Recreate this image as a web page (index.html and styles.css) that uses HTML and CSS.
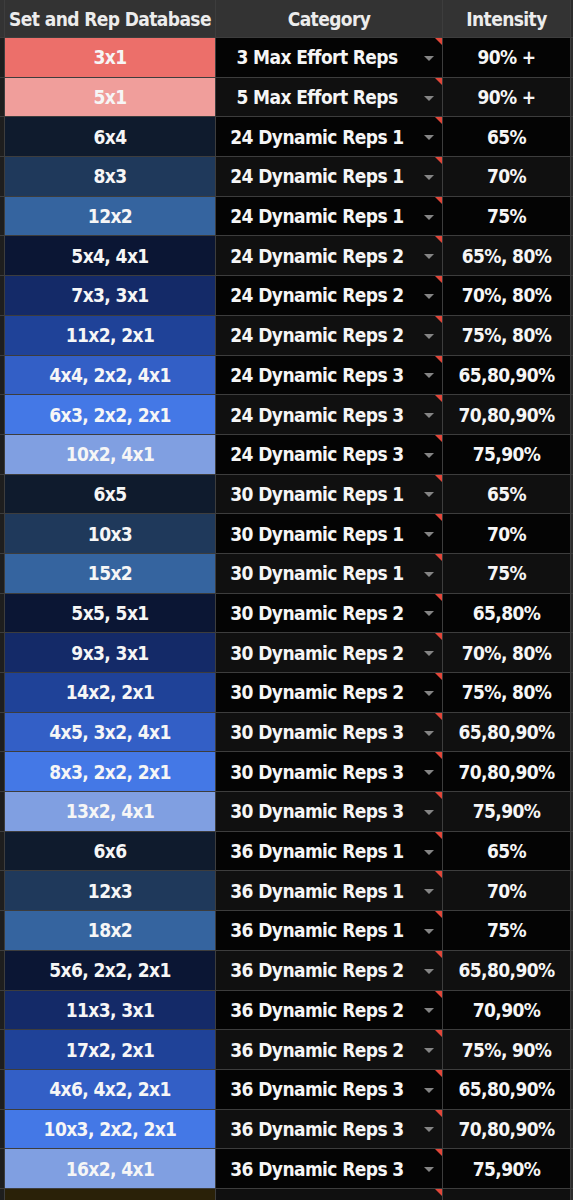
FILE: index.html
```html
<html>
    <head>
        <link rel="stylesheet" href="styles.css">
        <meta name="viewport" content="width=device-width, initial-scale=1.0">
        <title>Set and Rep Database</title>
    </head>
    <body>
        <div class="sheet">
            <div class="row head">
                <div class="gutter"></div>
                <div class="cell">Set and Rep Database</div>
                <div class="cell">Category</div>
                <div class="cell">Intensity</div>
                <div class="edge"></div>
            </div>

            <div class="row odd">
                <div class="gutter"></div>
                <div class="cell sets red1">3x1</div>
                <div class="cell cat"><span class="label">3 Max Effort Reps</span><span class="arrow"></span><span class="flag"></span></div>
                <div class="cell pct">90% +</div>
                <div class="edge"></div>
            </div>
            <div class="row even">
                <div class="gutter"></div>
                <div class="cell sets red2">5x1</div>
                <div class="cell cat"><span class="label">5 Max Effort Reps</span><span class="arrow"></span><span class="flag"></span></div>
                <div class="cell pct">90% +</div>
                <div class="edge"></div>
            </div>

            <!-- 24 reps -->
            <div class="row odd">
                <div class="gutter"></div>
                <div class="cell sets c1">6x4</div>
                <div class="cell cat"><span class="label">24 Dynamic Reps 1</span><span class="arrow"></span><span class="flag"></span></div>
                <div class="cell pct">65%</div>
                <div class="edge"></div>
            </div>
            <div class="row even">
                <div class="gutter"></div>
                <div class="cell sets c2">8x3</div>
                <div class="cell cat"><span class="label">24 Dynamic Reps 1</span><span class="arrow"></span><span class="flag"></span></div>
                <div class="cell pct">70%</div>
                <div class="edge"></div>
            </div>
            <div class="row odd">
                <div class="gutter"></div>
                <div class="cell sets c3">12x2</div>
                <div class="cell cat"><span class="label">24 Dynamic Reps 1</span><span class="arrow"></span><span class="flag"></span></div>
                <div class="cell pct">75%</div>
                <div class="edge"></div>
            </div>
            <div class="row even">
                <div class="gutter"></div>
                <div class="cell sets c4">5x4, 4x1</div>
                <div class="cell cat"><span class="label">24 Dynamic Reps 2</span><span class="arrow"></span><span class="flag"></span></div>
                <div class="cell pct">65%, 80%</div>
                <div class="edge"></div>
            </div>
            <div class="row odd">
                <div class="gutter"></div>
                <div class="cell sets c5">7x3, 3x1</div>
                <div class="cell cat"><span class="label">24 Dynamic Reps 2</span><span class="arrow"></span><span class="flag"></span></div>
                <div class="cell pct">70%, 80%</div>
                <div class="edge"></div>
            </div>
            <div class="row even">
                <div class="gutter"></div>
                <div class="cell sets c6">11x2, 2x1</div>
                <div class="cell cat"><span class="label">24 Dynamic Reps 2</span><span class="arrow"></span><span class="flag"></span></div>
                <div class="cell pct">75%, 80%</div>
                <div class="edge"></div>
            </div>
            <div class="row odd">
                <div class="gutter"></div>
                <div class="cell sets c7">4x4, 2x2, 4x1</div>
                <div class="cell cat"><span class="label">24 Dynamic Reps 3</span><span class="arrow"></span><span class="flag"></span></div>
                <div class="cell pct">65,80,90%</div>
                <div class="edge"></div>
            </div>
            <div class="row even">
                <div class="gutter"></div>
                <div class="cell sets c8">6x3, 2x2, 2x1</div>
                <div class="cell cat"><span class="label">24 Dynamic Reps 3</span><span class="arrow"></span><span class="flag"></span></div>
                <div class="cell pct">70,80,90%</div>
                <div class="edge"></div>
            </div>
            <div class="row odd">
                <div class="gutter"></div>
                <div class="cell sets c9">10x2, 4x1</div>
                <div class="cell cat"><span class="label">24 Dynamic Reps 3</span><span class="arrow"></span><span class="flag"></span></div>
                <div class="cell pct">75,90%</div>
                <div class="edge"></div>
            </div>

            <!-- 30 reps -->
            <div class="row even">
                <div class="gutter"></div>
                <div class="cell sets c1">6x5</div>
                <div class="cell cat"><span class="label">30 Dynamic Reps 1</span><span class="arrow"></span><span class="flag"></span></div>
                <div class="cell pct">65%</div>
                <div class="edge"></div>
            </div>
            <div class="row odd">
                <div class="gutter"></div>
                <div class="cell sets c2">10x3</div>
                <div class="cell cat"><span class="label">30 Dynamic Reps 1</span><span class="arrow"></span><span class="flag"></span></div>
                <div class="cell pct">70%</div>
                <div class="edge"></div>
            </div>
            <div class="row even">
                <div class="gutter"></div>
                <div class="cell sets c3">15x2</div>
                <div class="cell cat"><span class="label">30 Dynamic Reps 1</span><span class="arrow"></span><span class="flag"></span></div>
                <div class="cell pct">75%</div>
                <div class="edge"></div>
            </div>
            <div class="row odd">
                <div class="gutter"></div>
                <div class="cell sets c4">5x5, 5x1</div>
                <div class="cell cat"><span class="label">30 Dynamic Reps 2</span><span class="arrow"></span><span class="flag"></span></div>
                <div class="cell pct">65,80%</div>
                <div class="edge"></div>
            </div>
            <div class="row even">
                <div class="gutter"></div>
                <div class="cell sets c5">9x3, 3x1</div>
                <div class="cell cat"><span class="label">30 Dynamic Reps 2</span><span class="arrow"></span><span class="flag"></span></div>
                <div class="cell pct">70%, 80%</div>
                <div class="edge"></div>
            </div>
            <div class="row odd">
                <div class="gutter"></div>
                <div class="cell sets c6">14x2, 2x1</div>
                <div class="cell cat"><span class="label">30 Dynamic Reps 2</span><span class="arrow"></span><span class="flag"></span></div>
                <div class="cell pct">75%, 80%</div>
                <div class="edge"></div>
            </div>
            <div class="row even">
                <div class="gutter"></div>
                <div class="cell sets c7">4x5, 3x2, 4x1</div>
                <div class="cell cat"><span class="label">30 Dynamic Reps 3</span><span class="arrow"></span><span class="flag"></span></div>
                <div class="cell pct">65,80,90%</div>
                <div class="edge"></div>
            </div>
            <div class="row odd">
                <div class="gutter"></div>
                <div class="cell sets c8">8x3, 2x2, 2x1</div>
                <div class="cell cat"><span class="label">30 Dynamic Reps 3</span><span class="arrow"></span><span class="flag"></span></div>
                <div class="cell pct">70,80,90%</div>
                <div class="edge"></div>
            </div>
            <div class="row even">
                <div class="gutter"></div>
                <div class="cell sets c9">13x2, 4x1</div>
                <div class="cell cat"><span class="label">30 Dynamic Reps 3</span><span class="arrow"></span><span class="flag"></span></div>
                <div class="cell pct">75,90%</div>
                <div class="edge"></div>
            </div>

            <!-- 36 reps -->
            <div class="row odd">
                <div class="gutter"></div>
                <div class="cell sets c1">6x6</div>
                <div class="cell cat"><span class="label">36 Dynamic Reps 1</span><span class="arrow"></span><span class="flag"></span></div>
                <div class="cell pct">65%</div>
                <div class="edge"></div>
            </div>
            <div class="row even">
                <div class="gutter"></div>
                <div class="cell sets c2">12x3</div>
                <div class="cell cat"><span class="label">36 Dynamic Reps 1</span><span class="arrow"></span><span class="flag"></span></div>
                <div class="cell pct">70%</div>
                <div class="edge"></div>
            </div>
            <div class="row odd">
                <div class="gutter"></div>
                <div class="cell sets c3">18x2</div>
                <div class="cell cat"><span class="label">36 Dynamic Reps 1</span><span class="arrow"></span><span class="flag"></span></div>
                <div class="cell pct">75%</div>
                <div class="edge"></div>
            </div>
            <div class="row even">
                <div class="gutter"></div>
                <div class="cell sets c4">5x6, 2x2, 2x1</div>
                <div class="cell cat"><span class="label">36 Dynamic Reps 2</span><span class="arrow"></span><span class="flag"></span></div>
                <div class="cell pct">65,80,90%</div>
                <div class="edge"></div>
            </div>
            <div class="row odd">
                <div class="gutter"></div>
                <div class="cell sets c5">11x3, 3x1</div>
                <div class="cell cat"><span class="label">36 Dynamic Reps 2</span><span class="arrow"></span><span class="flag"></span></div>
                <div class="cell pct">70,90%</div>
                <div class="edge"></div>
            </div>
            <div class="row even">
                <div class="gutter"></div>
                <div class="cell sets c6">17x2, 2x1</div>
                <div class="cell cat"><span class="label">36 Dynamic Reps 2</span><span class="arrow"></span><span class="flag"></span></div>
                <div class="cell pct">75%, 90%</div>
                <div class="edge"></div>
            </div>
            <div class="row odd">
                <div class="gutter"></div>
                <div class="cell sets c7">4x6, 4x2, 2x1</div>
                <div class="cell cat"><span class="label">36 Dynamic Reps 3</span><span class="arrow"></span><span class="flag"></span></div>
                <div class="cell pct">65,80,90%</div>
                <div class="edge"></div>
            </div>
            <div class="row even">
                <div class="gutter"></div>
                <div class="cell sets c8">10x3, 2x2, 2x1</div>
                <div class="cell cat"><span class="label">36 Dynamic Reps 3</span><span class="arrow"></span><span class="flag"></span></div>
                <div class="cell pct">70,80,90%</div>
                <div class="edge"></div>
            </div>
            <div class="row odd">
                <div class="gutter"></div>
                <div class="cell sets c9">16x2, 4x1</div>
                <div class="cell cat"><span class="label">36 Dynamic Reps 3</span><span class="arrow"></span><span class="flag"></span></div>
                <div class="cell pct">75,90%</div>
                <div class="edge"></div>
            </div>

            <div class="row even">
                <div class="gutter"></div>
                <div class="cell sets olive"></div>
                <div class="cell cat"><span class="label"></span><span class="arrow"></span><span class="flag"></span></div>
                <div class="cell pct"></div>
                <div class="edge"></div>
            </div>
        </div>
    </body>
</html>
```

FILE: styles.css
```css
html, body {margin: 0; padding: 0; background: #2c2c2c; overflow: hidden;}
body {font-family: "DejaVu Sans Condensed", "Liberation Sans", sans-serif; font-weight: bold; color: #f6f6f6;}

.sheet {
    display: flex;
    flex-direction: column;
    gap: 1px;
    background: #3d3d3d;
}

.row {
    display: grid;
    grid-template-columns: 4px 210px 226px 127px 1fr;
    column-gap: 1px;
    height: 38.69px;
}

.row.head {height: 37px;}
.head .cell, .head .gutter {background: #333333;}
.head .cell {color: #ececec; font-size: 19px; letter-spacing: -0.6px;}

.gutter {background: #1e1e1e;}
.edge {background: #2c2c2c;}

.cell {
    display: flex;
    align-items: center;
    justify-content: center;
    font-size: 19px;
    letter-spacing: -0.6px;
    white-space: nowrap;
    overflow: hidden;
}

.odd .cat, .odd .pct {background: #040404;}
.even .cat, .even .pct {background: #101010;}

.cat {position: relative; justify-content: flex-start;}
.cat .label {flex: 1; text-align: center; padding-left: 2px;}
.cat .arrow {
    width: 26px;
    height: 5px;
    margin-top: 2px;
    display: flex;
    justify-content: center;
}
.cat .arrow::before {
    content: "";
    border-left: 5px solid transparent;
    border-right: 5px solid transparent;
    border-top: 5px solid #858585;
}
.cat .flag {
    position: absolute;
    top: 0;
    right: 0;
    border-top: 7px solid #e2473a;
    border-left: 7px solid transparent;
}

/* set colours */
.red1 {background: #ec6f6a;}
.red2 {background: #f09e9b;}
.c1 {background: #0f1b2d;}
.c2 {background: #1f395b;}
.c3 {background: #35649f;}
.c4 {background: #0b1634;}
.c5 {background: #142a68;}
.c6 {background: #1f4298;}
.c7 {background: #335fc6;}
.c8 {background: #4478e6;}
.c9 {background: #809fe1;}
.olive {background: #2a2108;}
```
